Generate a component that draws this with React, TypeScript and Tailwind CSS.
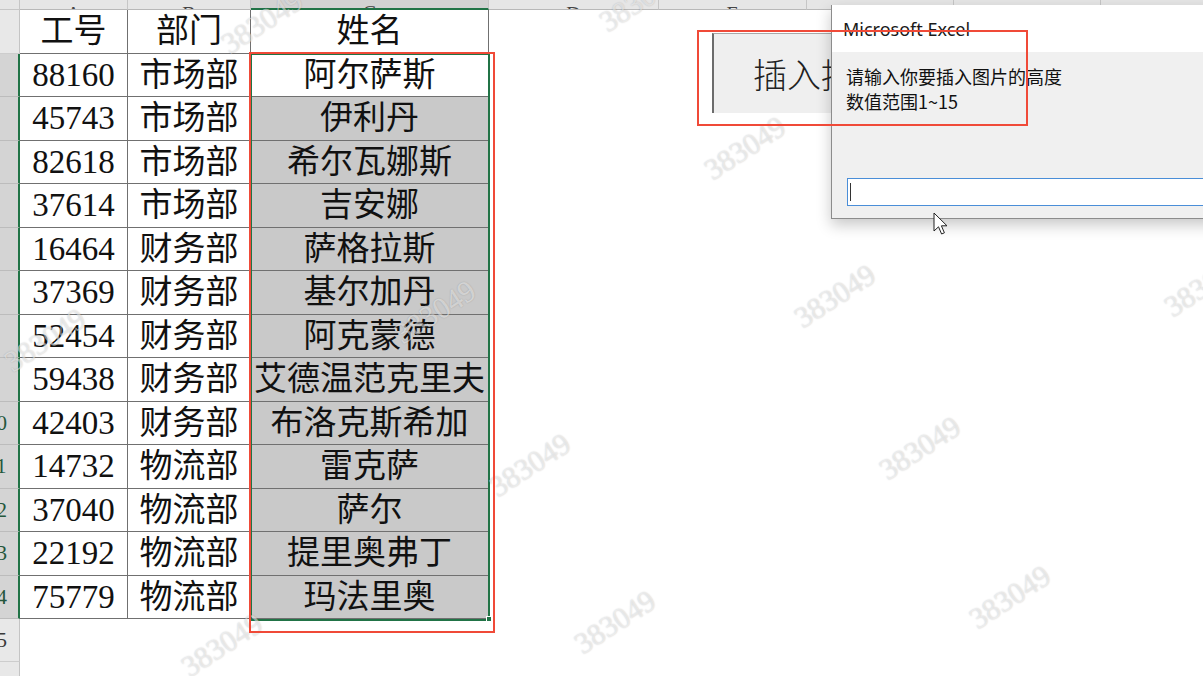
import React from "react";

const data: [string, string, string][] = [
  ["88160", "市场部", "阿尔萨斯"],
  ["45743", "市场部", "伊利丹"],
  ["82618", "市场部", "希尔瓦娜斯"],
  ["37614", "市场部", "吉安娜"],
  ["16464", "财务部", "萨格拉斯"],
  ["37369", "财务部", "基尔加丹"],
  ["52454", "财务部", "阿克蒙德"],
  ["59438", "财务部", "艾德温范克里夫"],
  ["42403", "财务部", "布洛克斯希加"],
  ["14732", "物流部", "雷克萨"],
  ["37040", "物流部", "萨尔"],
  ["22192", "物流部", "提里奥弗丁"],
  ["75779", "物流部", "玛法里奥"],
];

const cols: { l: string; w: string; sel?: boolean }[] = [
  { l: "A", w: "w-[108px]" },
  { l: "B", w: "w-[123px]" },
  { l: "C", w: "w-[238px]", sel: true },
  { l: "D", w: "w-[170px]" },
  { l: "E", w: "w-[148px]" },
  { l: "F", w: "w-[147px]" },
  { l: "G", w: "w-[147px]" },
  { l: "H", w: "w-[147px]" },
];

const marks: [number, number][] = [
  [262, 22],
  [640, 0],
  [745, 148],
  [1140, 118],
  [835, 296],
  [435, 312],
  [45, 340],
  [1205, 285],
  [530, 465],
  [920, 448],
  [615, 622],
  [1010, 597],
  [222, 645],
];

function RowHead({ n, sel, h }: { n: number; sel: boolean; h: string }) {
  return (
    <div
      className={`${h} shrink-0 w-[20px] overflow-hidden flex items-center border-b ${
        sel
          ? "bg-[#d4d4d4] border-r-2 border-r-[#217346] border-b-[#bcbcbc] text-[#24573c]"
          : "bg-[#e8e8e8] border-r border-r-[#c4c4c4] border-b-[#cdcdcd] text-[#3a3a3a]"
      }`}
    >
      <span
        className={`shrink-0 w-[45px] text-center text-[21px] leading-none ${
          n < 10 ? "ml-[-34px]" : "ml-[-26px]"
        }`}
      >
        {n}
      </span>
    </div>
  );
}

function Cell({ w, children, gray }: { w: string; children: React.ReactNode; gray?: boolean }) {
  return (
    <div
      className={`${w} shrink-0 border-r border-b border-[#707070] flex items-center justify-center whitespace-nowrap ${
        gray ? "bg-[#c9c9c9]" : "bg-white"
      }`}
    >
      {children}
    </div>
  );
}

export default function App() {
  const hs = ["h-[43px]", "h-[44px]"];
  return (
    <div className="relative w-[1203px] h-[676px] overflow-hidden bg-white text-[#111] font-['Liberation_Serif','Noto_Sans_CJK_SC',serif]">
      {/* column headers */}
      <div className="flex h-[10px]">
        <div className="w-[20px] shrink-0 bg-[#e6e6e6] border-r border-b border-[#c6c6c6]" />
        {cols.map((c) => (
          <div
            key={c.l}
            className={`${c.w} shrink-0 overflow-hidden flex items-end justify-center border-r border-[#c6c6c6] ${
              c.sel ? "bg-[#d2d2d2] border-b-2 border-b-[#217346]" : "bg-[#e6e6e6] border-b border-b-[#b8b8b8]"
            }`}
          >
            <span className="text-[20px] leading-none text-[#444] font-['Liberation_Serif',serif] mb-[-15px]">{c.l}</span>
          </div>
        ))}
        <div className="flex-1 bg-[#e6e6e6] border-b border-[#b8b8b8]" />
      </div>

      {/* row 1 */}
      <div className="flex text-[33px] leading-none">
        <RowHead n={1} sel={false} h="h-[44px]" />
        <Cell w="w-[108px]">工号</Cell>
        <Cell w="w-[123px]">部门</Cell>
        <Cell w="w-[238px]">姓名</Cell>
      </div>

      {data.map((r, i) => (
        <div key={i} className="flex text-[33px] leading-none">
          <RowHead n={i + 2} sel h={hs[i % 2]} />
          <Cell w="w-[108px]">{r[0]}</Cell>
          <Cell w="w-[123px]">{r[1]}</Cell>
          <Cell w="w-[238px]" gray={i > 0}>
            {r[2]}
          </Cell>
        </div>
      ))}

      <div className="flex">
        <RowHead n={15} sel={false} h="h-[43px]" />
      </div>
      <div className="flex">
        <RowHead n={16} sel={false} h="h-[43px]" />
      </div>

      {/* selection outline */}
      <div className="absolute left-[250px] top-[53px] w-[240px] h-[568px] border-2 border-[#217346] pointer-events-none" />
      <div className="absolute left-[486px] top-[616px] w-[6px] h-[6px] bg-[#217346] border border-white" />

      {/* watermarks */}
      {marks.map(([x, y], i) => (
        <div
          key={i}
          className="absolute -translate-x-1/2 -translate-y-1/2 -rotate-[33deg] text-[30px] leading-none text-white/50 [text-shadow:0_0_1.5px_rgba(0,0,0,0.22)] pointer-events-none whitespace-nowrap"
          style={{ left: x, top: y }}
        >
          383049
        </div>
      ))}

      {/* sheet button */}
      <div className="absolute left-[712px] top-[33px] w-[230px] h-[80px] bg-[#efefef] border-l-2 border-l-[#6c6c6c] border-t border-t-[#a8a8a8] flex items-center pl-[39px]">
        <span className="text-[34px] leading-none text-[#222] font-['Noto_Sans_CJK_SC',sans-serif] font-light">插入按钮</span>
      </div>

      {/* input dialog */}
      <div className="absolute left-[831px] top-[5px] w-[400px] h-[214px] bg-[#f0f0f0] border-l border-b border-[#8c8c8c] shadow-[0_6px_14px_rgba(0,0,0,0.22)] flex flex-col font-['Noto_Sans','Noto_Sans_CJK_SC',sans-serif]">
        <div className="h-[47px] shrink-0 bg-white flex items-center pl-[11px]">
          <span className="text-[18px] text-[#1a1a1a] leading-none">Microsoft Excel</span>
        </div>
        <div className="flex-1 flex flex-col pl-[14px] pt-[12px]">
          <div className="text-[18px] leading-[25px] text-[#111] font-['Noto_Sans_CJK_SC',sans-serif]">
            <div>请输入你要插入图片的高度</div>
            <div>数值范围1~15</div>
          </div>
          <div className="mt-[64px] ml-[1px] h-[28px] bg-white border border-[#4a8ed8] flex items-center pl-[2px]">
            <div className="w-[1px] h-[18px] bg-[#333]" />
          </div>
        </div>
      </div>

      {/* red annotation boxes */}
      <div className="absolute left-[249px] top-[52px] w-[246px] h-[581px] border-2 border-[#f04a38] pointer-events-none" />
      <div className="absolute left-[697px] top-[30px] w-[331px] h-[96px] border-2 border-[#f04a38] pointer-events-none" />

      {/* mouse cursor */}
      <svg className="absolute left-[933px] top-[212px]" width="18" height="26" viewBox="0 0 18 26">
        <path d="M1 1 L1 19 L5.5 14.8 L8.6 22 L11.4 20.8 L8.4 13.8 L14 13.8 Z" fill="#fff" stroke="#222" strokeWidth="1" strokeLinejoin="round" />
      </svg>
    </div>
  );
}
